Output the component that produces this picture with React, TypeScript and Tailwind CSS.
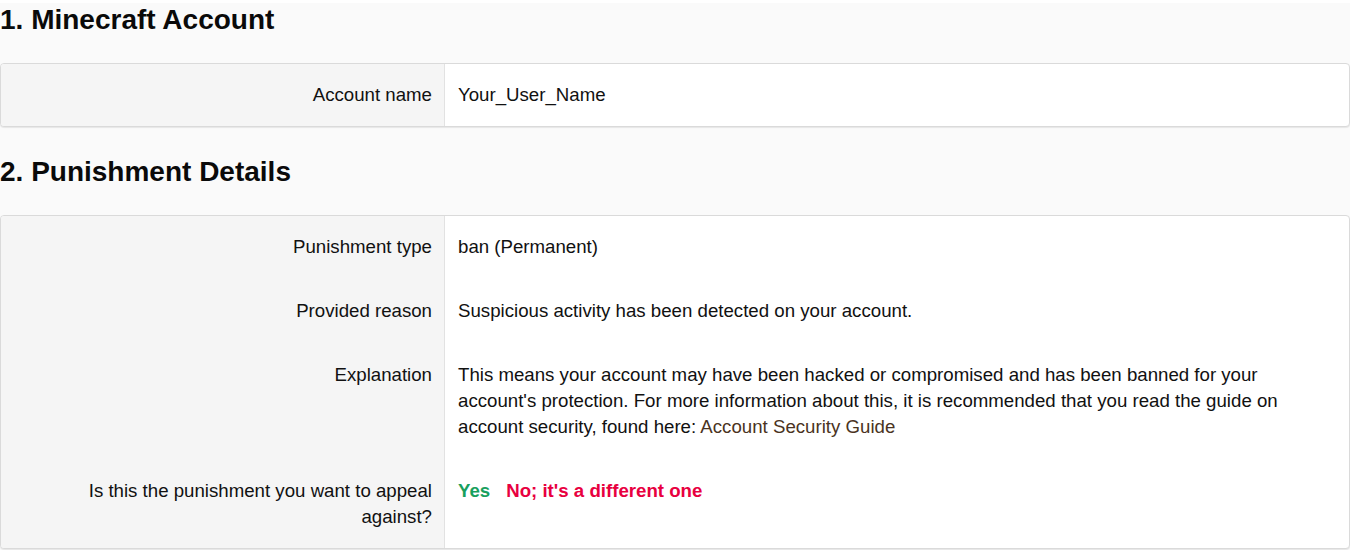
import React from "react";

type Row = {
  label: React.ReactNode;
  value: React.ReactNode;
};

function DetailCard({ rows, pad }: { rows: Row[]; pad: string }) {
  return (
    <div className="overflow-hidden rounded-[4px] border border-[#dadada] bg-white shadow-[0_1px_1px_rgba(0,0,0,0.08)]">
      {rows.map((row, i) => (
        <div key={i} className="group grid grid-cols-[444px_1fr]">
          <div
            className={`border-r border-[#e2e2e2] bg-[#f5f5f5] pl-12 pr-3 text-right ${pad}`}
          >
            {row.label}
          </div>
          <div className={`pl-[13px] pr-3 ${pad}`}>{row.value}</div>
        </div>
      ))}
    </div>
  );
}

export default function App() {
  return (
    <div
      className="min-h-screen bg-[#fafafa] text-[14pt] leading-[26px] text-[#111111]"
      style={{ fontFamily: '"Liberation Sans", Arial, sans-serif' }}
    >
      <h1 className="mt-[3px] mb-[26px] text-[28px] font-bold leading-[34px] text-[#0a0a0a]">
        1. Minecraft Account
      </h1>
      <DetailCard
        pad="py-[18px]"
        rows={[{ label: "Account name", value: "Your_User_Name" }]}
      />

      <h2 className="mt-[28px] mb-[26px] text-[28px] font-bold leading-[34px] text-[#0a0a0a]">
        2. Punishment Details
      </h2>
      <DetailCard
        pad="pt-[18px] pb-[20px] group-last:pb-[18px]"
        rows={[
          { label: "Punishment type", value: "ban (Permanent)" },
          {
            label: "Provided reason",
            value: "Suspicious activity has been detected on your account.",
          },
          {
            label: "Explanation",
            value: (
              <>
                This means your account may have been hacked or compromised and
                has been banned for your account's protection. For more
                information about this, it is recommended that you read the
                guide on account security, found here:{" "}
                <a href="#" className="text-[#4a3322]">
                  Account Security Guide
                </a>
              </>
            ),
          },
          {
            label: "Is this the punishment you want to appeal against?",
            value: (
              <div className="flex gap-4 font-bold">
                <a href="#" className="text-[#18a05e]">
                  Yes
                </a>
                <a href="#" className="text-[#e8003f]">
                  No; it's a different one
                </a>
              </div>
            ),
          },
        ]}
      />
    </div>
  );
}
